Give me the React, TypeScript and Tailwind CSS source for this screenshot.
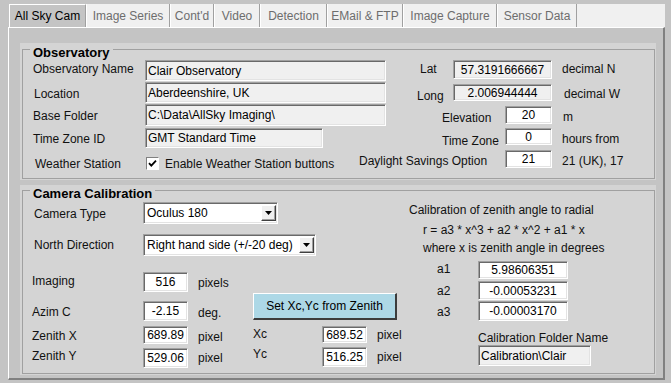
import React from "react";

const sunken =
  "border border-t-[#a0a0a0] border-l-[#a0a0a0] border-r-white border-b-white shadow-[inset_1px_1px_0_#696969,inset_-1px_-1px_0_#e3e3e3] shrink-0 flex items-center text-[12px] leading-[14px] text-black whitespace-nowrap overflow-hidden";
const lbl = "text-[12px] leading-[14px] whitespace-nowrap shrink-0";

function Box({
  cls,
  children,
  center,
  ro,
}: {
  cls: string;
  children: React.ReactNode;
  center?: boolean;
  ro?: boolean;
}) {
  return (
    <div
      className={`${sunken} ${ro ? "bg-[#f0f0f0]" : "bg-white"} ${
        center ? "justify-center" : "pl-[2px]"
      } ${cls}`}
    >
      {children}
    </div>
  );
}

function Arrow() {
  return (
    <div className="w-[15px] h-[16px] bg-[#f0f0f0] border border-t-white border-l-white border-r-[#404040] border-b-[#404040] shadow-[inset_-1px_-1px_0_#a0a0a0] flex items-center justify-center shrink-0">
      <svg width="7" height="4" viewBox="0 0 7 4">
        <polygon points="0,0 7,0 3.5,4" fill="#000" />
      </svg>
    </div>
  );
}

function Tab({ cls, label, active }: { cls: string; label: string; active?: boolean }) {
  return (
    <div
      className={`h-full flex items-center justify-center shrink-0 text-[12px] border-r border-r-[#a0a0a0] border-l border-l-white ${
        active ? "bg-[#c4c4c4] text-black border-t border-t-white" : "text-[#6d6d6d]"
      } ${cls}`}
    >
      {label}
    </div>
  );
}

export default function App() {
  return (
    <div className="w-[671px] h-[383px] bg-[#c4c4c4] overflow-hidden font-['Liberation_Sans',Arial,sans-serif] text-[#111] text-[12px]">
      {/* Tab strip */}
      <div className="pt-[4px] pl-[9px]">
        <div className="flex h-[23px] w-[656px] bg-[#f0f0f0]">
          <Tab cls="w-[77px]" label="All Sky Cam" active />
          <Tab cls="w-[84px]" label="Image Series" />
          <Tab cls="w-[44px]" label="Cont'd" />
          <Tab cls="w-[46px]" label="Video" />
          <Tab cls="w-[67px]" label="Detection" />
          <Tab cls="w-[76px]" label="EMail & FTP" />
          <Tab cls="w-[94px]" label="Image Capture" />
          <Tab cls="w-[80px]" label="Sensor Data" />
        </div>
      </div>

      {/* Page */}
      <div className="ml-[8px] w-[657px] h-[353px] border-t border-l border-t-white border-l-white border-r-2 border-b-2 border-r-[#808080] border-b-[#808080] pt-[15px] pl-[11px]">
        {/* Observatory panel */}
        <div className="bg-[#d4d4d4] w-[636px] pt-[6px] pl-[2px] pb-[1px]">
          <div className="w-[633px] h-[130px] border border-[#a0a0a0]">
            <div className="-mt-[5px] ml-[7px] px-[3px] w-fit bg-[#d4d4d4] font-bold text-[13px] leading-[15px] text-black">
              Observatory
            </div>

            {/* Row 1 */}
            <div className="flex h-[22px] items-start">
              <div className={`${lbl} ml-[10px] w-[112px] mt-[2px]`}>Observatory Name</div>
              <Box ro cls="w-[241px] h-[21px]">Clair Observatory</Box>
              <div className={`${lbl} ml-[34px] w-[33px] mt-[2px]`}>Lat</div>
              <Box ro center cls="w-[99px] h-[19px] text-[11px]">57.3191666667</Box>
              <div className={`${lbl} ml-[10px] mt-[2px]`}>decimal N</div>
            </div>
            {/* Row 2 */}
            <div className="flex h-[22px] items-start">
              <div className={`${lbl} ml-[11px] w-[111px] mt-[5px]`}>Location</div>
              <Box ro cls="w-[241px] h-[21px]">Aberdeenshire, UK</Box>
              <div className={`${lbl} ml-[31px] w-[36px] mt-[7px]`}>Long</div>
              <Box ro center cls="w-[99px] h-[17px] mt-[2px] text-[11px]">2.006944444</Box>
              <div className={`${lbl} ml-[12px] mt-[5px]`}>decimal W</div>
            </div>
            {/* Row 3 */}
            <div className="flex h-[22px] items-start">
              <div className={`${lbl} ml-[10px] w-[112px] mt-[5px]`}>Base Folder</div>
              <Box ro cls="w-[241px] h-[22px]">C:\Data\AllSky Imaging\</Box>
              <div className={`${lbl} ml-[56px] w-[63px] mt-[7px]`}>Elevation</div>
              <Box center cls="w-[47px] h-[18px] mt-[2px]">20</Box>
              <div className={`${lbl} ml-[11px] mt-[6px]`}>m</div>
            </div>
            {/* Row 4 */}
            <div className="flex h-[22px] items-start">
              <div className={`${lbl} ml-[10px] w-[112px] mt-[6px]`}>Time Zone ID</div>
              <Box ro cls="w-[178px] h-[20px] mt-[2px]">GMT Standard Time</Box>
              <div className={`${lbl} ml-[119px] w-[63px] mt-[8px]`}>Time Zone</div>
              <Box center cls="w-[47px] h-[17px] mt-[2px]">0</Box>
              <div className={`${lbl} ml-[10px] mt-[6px]`}>hours from</div>
            </div>
            {/* Row 5 */}
            <div className="flex h-[22px] items-start">
              <div className={`${lbl} ml-[12px] w-[111px] mt-[9px]`}>Weather Station</div>
              <div className="w-[13px] h-[13px] mt-[9px] shrink-0 bg-white border border-t-[#808080] border-l-[#808080] border-r-white border-b-white flex items-center justify-center">
                <svg width="11" height="11" viewBox="0 0 11 11">
                  <path d="M2 5.2 L4.3 7.6 L9 2.6" stroke="#000" strokeWidth="1.8" fill="none" />
                </svg>
              </div>
              <div className={`${lbl} ml-[6px] w-[194px] mt-[9px]`}>Enable Weather Station buttons</div>
              <div className={`${lbl} w-[146px] mt-[6px]`}>Daylight Savings Option</div>
              <Box center cls="w-[47px] h-[18px] mt-[2px]">21</Box>
              <div className={`${lbl} ml-[10px] mt-[6px]`}>21 (UK), 17</div>
            </div>
          </div>
        </div>

        {/* Camera Calibration panel */}
        <div className="bg-[#d4d4d4] w-[636px] mt-[5px] pt-[5px] pl-[2px] pb-[1px]">
          <div className="w-[633px] h-[184px] border border-[#a0a0a0]">
            <div className="-mt-[5px] ml-[7px] px-[3px] w-fit bg-[#d4d4d4] font-bold text-[13px] leading-[15px] text-black">
              Camera Calibration
            </div>
            <div className="flex mt-[1px]">
              {/* Left column */}
              <div className="w-[386px] shrink-0 flex flex-col">
                {/* Camera Type */}
                <div className="flex items-start h-[22px]">
                  <div className={`${lbl} ml-[11px] w-[109px] mt-[5px]`}>Camera Type</div>
                  <div className={`${sunken} bg-white w-[135px] h-[22px] justify-between pl-[3px] pr-[1px]`}>
                    <span>Oculus 180</span>
                    <Arrow />
                  </div>
                </div>
                {/* North Direction */}
                <div className="flex items-start h-[22px] mt-[10px]">
                  <div className={`${lbl} ml-[11px] w-[109px] mt-[4px]`}>North Direction</div>
                  <div className={`${sunken} bg-white w-[173px] h-[22px] justify-between pl-[3px] pr-[1px]`}>
                    <span>Right hand side (+/-20 deg)</span>
                    <Arrow />
                  </div>
                </div>
                {/* Imaging */}
                <div className="flex items-start h-[20px] mt-[16px]">
                  <div className={`${lbl} ml-[9px] w-[111px] mt-[2px]`}>Imaging</div>
                  <Box center cls="w-[45px] h-[20px]">516</Box>
                  <div className={`${lbl} ml-[10px] mt-[4px]`}>pixels</div>
                </div>
                {/* Azim C + button */}
                <div className="flex items-start h-[28px] mt-[1px]">
                  <div className={`${lbl} ml-[9px] w-[111px] mt-[12px]`}>Azim C</div>
                  <Box center cls="w-[45px] h-[20px] mt-[8px]">-2.15</Box>
                  <div className={`${lbl} ml-[10px] w-[55px] mt-[13px]`}>deg.</div>
                  <div className="w-[144px] h-[27px] shrink-0 bg-[#add8e6] border-t border-l border-t-white border-l-white border-r-2 border-b-2 border-r-[#3c3c3c] border-b-[#3c3c3c] flex items-center justify-center text-[12px] text-black">
                    Set Xc,Yc from Zenith
                  </div>
                </div>
                {/* Zenith X */}
                <div className="flex items-start h-[18px] mt-[5px]">
                  <div className={`${lbl} ml-[9px] w-[111px] mt-[3px]`}>Zenith X</div>
                  <Box center cls="w-[45px] h-[18px]">689.89</Box>
                  <div className={`${lbl} ml-[10px] w-[55px] mt-[4px]`}>pixel</div>
                  <div className={`${lbl} w-[69px] mt-[1px]`}>Xc</div>
                  <Box center cls="w-[45px] h-[17px]">689.52</Box>
                  <div className={`${lbl} ml-[10px] mt-[2px]`}>pixel</div>
                </div>
                {/* Zenith Y */}
                <div className="flex items-start h-[21px] mt-[3px]">
                  <div className={`${lbl} ml-[9px] w-[111px] mt-[2px]`}>Zenith Y</div>
                  <Box center cls="w-[45px] h-[20px] mt-[1px]">529.06</Box>
                  <div className={`${lbl} ml-[10px] w-[55px] mt-[4px]`}>pixel</div>
                  <div className={`${lbl} w-[69px] mt-[0px]`}>Yc</div>
                  <Box center cls="w-[45px] h-[20px]">516.25</Box>
                  <div className={`${lbl} ml-[10px] mt-[3px]`}>pixel</div>
                </div>
              </div>

              {/* Right column */}
              <div className="flex flex-col">
                <div className={`${lbl} mt-[1px]`}>Calibration of zenith angle to radial</div>
                <div className={`${lbl} mt-[6px] ml-[14px]`}>r = a3 * x^3 + a2 * x^2 + a1 * x</div>
                <div className={`${lbl} mt-[4px] ml-[14px]`}>where x is zenith angle in degrees</div>
                <div className="flex items-start mt-[6px]">
                  <div className={`${lbl} ml-[28px] w-[41px] mt-[1px]`}>a1</div>
                  <Box center cls="w-[90px] h-[18px]">5.98606351</Box>
                </div>
                <div className="flex items-start mt-[2px]">
                  <div className={`${lbl} ml-[28px] w-[41px] mt-[3px]`}>a2</div>
                  <Box center cls="w-[90px] h-[19px]">-0.00053231</Box>
                </div>
                <div className="flex items-start mt-[1px]">
                  <div className={`${lbl} ml-[28px] w-[41px] mt-[4px]`}>a3</div>
                  <Box center cls="w-[90px] h-[20px]">-0.00003170</Box>
                </div>
                <div className={`${lbl} mt-[10px] ml-[69px]`}>Calibration Folder Name</div>
                <Box ro cls="w-[113px] h-[21px] ml-[69px]">Calibration\Clair</Box>
              </div>
            </div>
          </div>
        </div>
      </div>
    </div>
  );
}
